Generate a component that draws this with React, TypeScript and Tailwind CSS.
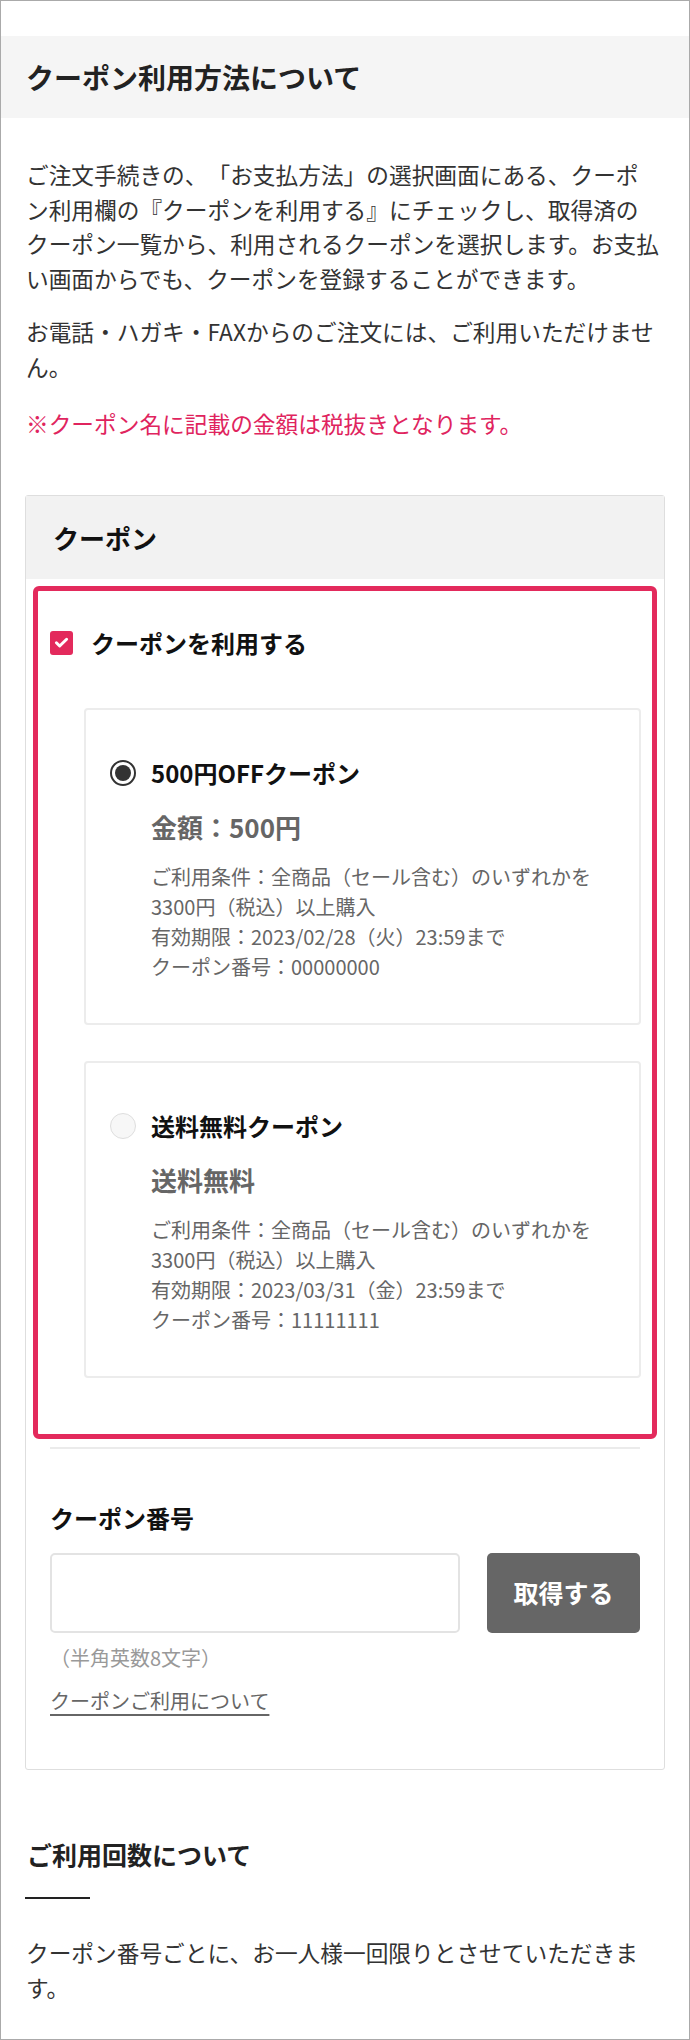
import React from "react";

const FONT = "font-['Noto_Sans_CJK_JP','Noto_Sans',sans-serif]";

type Coupon = {
  id: string;
  title: string;
  amount: string;
  expiry: string;
  code: string;
};

const COUPONS: Coupon[] = [
  {
    id: "c500",
    title: "500円OFFクーポン",
    amount: "金額：500円",
    expiry: "有効期限：2023/02/28（火）23:59まで",
    code: "クーポン番号：00000000",
  },
  {
    id: "free",
    title: "送料無料クーポン",
    amount: "送料無料",
    expiry: "有効期限：2023/03/31（金）23:59まで",
    code: "クーポン番号：11111111",
  },
];

function Radio({ checked }: { checked: boolean }) {
  if (checked) {
    return (
      <span className="flex h-[26px] w-[26px] shrink-0 items-center justify-center rounded-full border-2 border-[#333]">
        <span className="h-[16px] w-[16px] rounded-full bg-[#333]" />
      </span>
    );
  }
  return (
    <span className="h-[26px] w-[26px] shrink-0 rounded-full border-[1.5px] border-[#dedede] bg-[#f7f7f7]" />
  );
}

function CouponCard({ coupon, checked }: { coupon: Coupon; checked: boolean }) {
  return (
    <div className="rounded-[4px] border-2 border-[#ececec] pt-[48px] pb-[41px] pl-[24px] pr-[20px]">
      <div className="flex items-center gap-[15px]">
        <Radio checked={checked} />
        <span className="text-[24px] leading-[30px] font-bold text-[#111]">{coupon.title}</span>
      </div>
      <div className="pl-[41px]">
        <p className="mt-[21px] text-[26px] leading-[36px] font-bold text-[#666]">{coupon.amount}</p>
        <div className="mt-[17px] text-[20px] leading-[30px] text-[#666]">
          <p>
            ご利用条件：全商品（セール含む）のいずれかを
            <br />
            3300円（税込）以上購入
          </p>
          <p>{coupon.expiry}</p>
          <p>{coupon.code}</p>
        </div>
      </div>
    </div>
  );
}

export default function App() {
  return (
    <div className={`${FONT} [text-spacing-trim:space-all] w-[690px] h-[2040px] border border-[#aaa] bg-white text-[#333]`}>
      <div className="pt-[35px]">
        <div className="flex h-[82px] items-center bg-[#f5f5f5] px-[25px]">
          <h1 className="text-[28px] font-bold text-[#222]">クーポン利用方法について</h1>
        </div>
      </div>

      <div className="px-[24px]">
        <div className="pl-[1px] text-[22.7px] leading-[34.5px]">
          <p className="pt-[40px]">
            ご注文手続きの、「お支払方法」の選択画面にある、クーポ
            <br />
            ン利用欄の『クーポンを利用する』にチェックし、取得済の
            <br />
            クーポン一覧から、利用されるクーポンを選択します。お支払
            <br />
            い画面からでも、クーポンを登録することができます。
          </p>
          <p className="mt-[19px]">お電話・ハガキ・FAXからのご注文には、ご利用いただけません。</p>
          <p className="mt-[23px] text-[#e0245e]">※クーポン名に記載の金額は税抜きとなります。</p>
        </div>

        <section className="mt-[53px] rounded-[3px] border border-[#dedede]">
          <div className="flex h-[83px] items-center bg-[#f2f2f2] pl-[27px]">
            <h2 className="text-[26px] font-bold text-[#111]">クーポン</h2>
          </div>

          <div className="mx-[7px] mt-[7px] rounded-[6px] border-[5px] border-[#e32a5c] pb-[56px]">
            <label className="flex h-[32px] items-center gap-[18px] pl-[12px] mt-[36px]">
              <span className="flex h-[24px] w-[23px] items-center justify-center rounded-[3px] bg-[#e32a5c]">
                <svg viewBox="0 0 16 16" className="h-[17px] w-[17px]" fill="none">
                  <path d="M3.2 8.2l3.1 3.1L12.8 4.9" stroke="#fff" strokeWidth="2.8" strokeLinecap="round" strokeLinejoin="round" />
                </svg>
              </span>
              <span className="text-[24px] font-bold text-[#111]">クーポンを利用する</span>
            </label>

            <div className="mt-[49px] ml-[46px] mr-[11px] flex flex-col gap-[36px]">
              {COUPONS.map((c, i) => (
                <CouponCard key={c.id} coupon={c} checked={i === 0} />
              ))}
            </div>
          </div>

          <div className="mx-[24px] mt-[8px] h-[2px] bg-[#ebebeb]" />

          <div className="px-[24px] pb-[53px]">
            <h3 className="mt-[53px] text-[24px] leading-[32px] font-bold text-[#111]">クーポン番号</h3>
            <div className="mt-[19px] flex gap-[27px]">
              <input
                type="text"
                className="h-[80px] w-[410px] rounded-[5px] border-2 border-[#e3e3e3] px-3 text-[22px] outline-none"
              />
              <button
                type="button"
                className="h-[80px] flex-1 rounded-[5px] bg-[#666] text-[25px] font-bold text-white"
              >
                取得する
              </button>
            </div>
            <p className="mt-[10px] text-[20px] leading-[30px] text-[#999]">（半角英数8文字）</p>
            <a href="#" className="mt-[13px] inline-block text-[20px] leading-[30px] text-[#666] underline underline-offset-[5px]">
              クーポンご利用について
            </a>
          </div>
        </section>

        <h2 className="mt-[67px] pl-[2px] text-[25px] leading-[34px] font-bold text-[#222]">ご利用回数について</h2>
        <div className="mt-[26px] h-[2px] w-[65px] bg-[#222]" />
        <p className="mt-[36px] pl-[1px] text-[22.7px] leading-[35px]">
          クーポン番号ごとに、お一人様一回限りとさせていただきます。
        </p>
      </div>
    </div>
  );
}
